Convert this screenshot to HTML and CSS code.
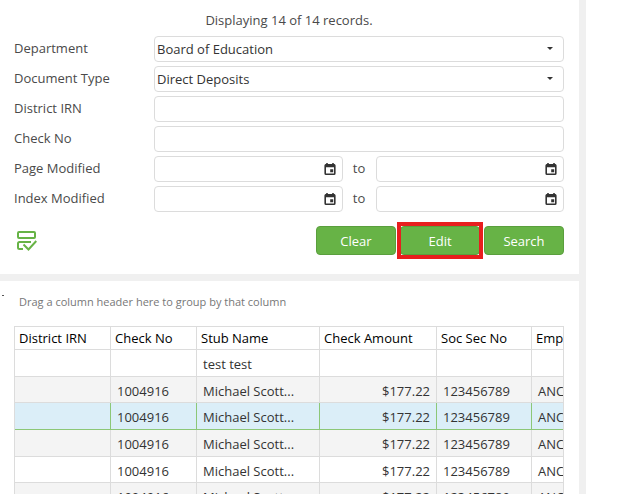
FILE: index.html
```html
<!DOCTYPE html>
<html lang="en">
<head>
    <meta charset="UTF-8">
    <meta name="viewport" content="width=device-width, initial-scale=1.0">
    <title>Document Search</title>
    <link rel="stylesheet" href="styles.css">
</head>
<body>
    <svg class="sprite" aria-hidden="true">
        <symbol id="calendar" viewBox="0 0 12 12">
            <path d="M3 0v2M9 0v2" stroke="currentColor" stroke-width="1.6"/>
            <rect x="1.2" y="1.7" width="9.6" height="9.5" rx="0.8" fill="none" stroke="currentColor" stroke-width="1.6"/>
            <path d="M1 1.5h10v2.7H1zM6.2 6.2h3v3h-3z" fill="currentColor"/>
        </symbol>
        <symbol id="arrow" viewBox="0 0 6 3">
            <path d="M0 0h6L3 3z" fill="currentColor"/>
        </symbol>
    </svg>

    <main>
        <form class="panel search" onsubmit="return false">
            <p class="records">Displaying 14 of 14 records.</p>

            <div class="fields">
                <label for="department">Department</label>
                <div class="field">
                    <select id="department">
                        <option>Board of Education</option>
                    </select>
                    <svg class="arrow"><use href="#arrow"/></svg>
                </div>

                <label for="docType">Document Type</label>
                <div class="field">
                    <select id="docType">
                        <option>Direct Deposits</option>
                    </select>
                    <svg class="arrow"><use href="#arrow"/></svg>
                </div>

                <label for="districtIrn">District IRN</label>
                <div class="field"><input type="text" id="districtIrn"></div>

                <label for="checkNo">Check No</label>
                <div class="field"><input type="text" id="checkNo"></div>

                <label for="pageFrom">Page Modified</label>
                <div class="range">
                    <div class="field">
                        <input type="text" id="pageFrom">
                        <button type="button" class="calendar" aria-label="Pick date"><svg><use href="#calendar"/></svg></button>
                    </div>
                    <label for="pageTo">to</label>
                    <div class="field">
                        <input type="text" id="pageTo">
                        <button type="button" class="calendar" aria-label="Pick date"><svg><use href="#calendar"/></svg></button>
                    </div>
                </div>

                <label for="indexFrom">Index Modified</label>
                <div class="range">
                    <div class="field">
                        <input type="text" id="indexFrom">
                        <button type="button" class="calendar" aria-label="Pick date"><svg><use href="#calendar"/></svg></button>
                    </div>
                    <label for="indexTo">to</label>
                    <div class="field">
                        <input type="text" id="indexTo">
                        <button type="button" class="calendar" aria-label="Pick date"><svg><use href="#calendar"/></svg></button>
                    </div>
                </div>
            </div>

            <div class="actions">
                <button type="button" class="select-rows" aria-label="Select rows">
                    <svg viewBox="0 0 20 20" fill="none" stroke="currentColor" stroke-width="2">
                        <rect x="1" y="1" width="17" height="6" rx="1"/>
                        <path d="M14 11H2.5Q1 11 1 12.500V16.500Q1 18 2.500 18H6"/>
                        <path d="M6.500 13.500L11.500 18.500L19.300 10"/>
                    </svg>
                </button>
                <button type="button" class="btn">Clear</button>
                <button type="button" class="btn highlight">Edit</button>
                <button type="submit" class="btn">Search</button>
            </div>
        </form>

        <section class="panel results">
            <div class="group-bar">
                <span class="mark"></span>
                <p>Drag a column header here to group by that column</p>
            </div>
            <div class="grid">
                <table>
                    <colgroup>
                        <col class="col-irn">
                        <col class="col-check">
                        <col class="col-stub">
                        <col class="col-amount">
                        <col class="col-ssn">
                        <col class="col-emp">
                    </colgroup>
                    <thead>
                        <tr><th>District IRN</th><th>Check No</th><th>Stub Name</th><th>Check Amount</th><th>Soc Sec No</th><th>Employee</th></tr>
                        <tr class="filter"><td></td><td></td><td>test test</td><td></td><td></td><td></td></tr>
                    </thead>
                    <tbody>
                        <tr><td></td><td>1004916</td><td>Michael Scott...</td><td class="amount">$177.22</td><td>123456789</td><td>ANC</td></tr>
                        <tr class="selected"><td></td><td>1004916</td><td>Michael Scott...</td><td class="amount">$177.22</td><td>123456789</td><td>ANC</td></tr>
                        <tr><td></td><td>1004916</td><td>Michael Scott...</td><td class="amount">$177.22</td><td>123456789</td><td>ANC</td></tr>
                        <tr><td></td><td>1004916</td><td>Michael Scott...</td><td class="amount">$177.22</td><td>123456789</td><td>ANC</td></tr>
                        <tr><td></td><td>1004916</td><td>Michael Scott...</td><td class="amount">$177.22</td><td>123456789</td><td>ANC</td></tr>
                    </tbody>
                </table>
            </div>
        </section>
    </main>
</body>
</html>
```
FILE: styles.css
```css
* {
    box-sizing: border-box;
}
body {
    margin: 0;
    height: 100vh;
    overflow: hidden;
    background-color: #fff;
    color: #4a4a4a;
    font-family: "Open Sans", "Noto Sans", sans-serif;
    font-size: 13px;
    line-height: 18px;
}
p {
    margin: 0;
}
input, select, button {
    font: inherit;
    color: #333;
    background: none;
    border: 0;
    padding: 0;
    margin: 0;
}
button {
    cursor: pointer;
}
svg {
    display: block;
}
.sprite {
    display: none;
}
main {
    margin-right: 39px;
}
.panel {
    border-right: 7px solid #f0f0f0;
}

/* search form */
.search {
    padding: 11px 15px 19px 14px;
    border-bottom: 7px solid #f0f0f0;
}
.records {
    text-align: center;
    margin-bottom: 7px;
}
.fields {
    display: grid;
    grid-template-columns: 140px minmax(0, 1fr);
    row-gap: 4px;
}
.fields label {
    line-height: 24px;
}
.field {
    display: flex;
    align-items: center;
    flex: 1;
    min-width: 0;
    height: 26px;
    border: 1px solid #dcdcdc;
    border-radius: 4px;
    position: relative;
}
.field input, .field select {
    flex: 1;
    min-width: 0;
    height: 24px;
    padding: 0 2px;
    outline: none;
    appearance: none;
}
.field .arrow {
    position: absolute;
    right: 10px;
    top: 10px;
    width: 6px;
    height: 3px;
    color: #333;
    pointer-events: none;
}
.range {
    display: flex;
}
.range label {
    width: 33px;
    text-align: center;
}
.calendar {
    margin-right: 6px;
}
.calendar svg {
    width: 12px;
    height: 12px;
}
.actions {
    display: flex;
    align-items: center;
    gap: 4px;
    margin-top: 14px;
}
.select-rows {
    margin-left: 3px;
    margin-right: auto;
    padding-top: 1px;
    color: #67b346;
}
.select-rows svg {
    width: 20px;
    height: 20px;
}
.btn {
    width: 80px;
    height: 29px;
    color: #fff;
    background-color: #67b346;
    border: 1px solid #5a9f3d;
    border-radius: 4px;
    position: relative;
}
.btn:hover {
    background-color: #5a9f3d;
}
.highlight::after {
    content: "";
    position: absolute;
    inset: -5px -4px;
    border: 4px solid #e81e1e;
}

/* results grid */
.results {
    padding-right: 15px;
}
.group-bar {
    display: flex;
    height: 45px;
    padding: 12px 0 0 2px;
    color: #777;
    font-size: 11px;
}
.mark {
    width: 2px;
    height: 1px;
    margin: 2px 15px 0 0;
    background-color: #555;
}
.grid {
    margin-left: 14px;
    overflow: hidden;
    border: 1px solid #dcdcdc;
    border-bottom: 0;
}
table {
    width: 620px;
    table-layout: fixed;
    border-collapse: separate;
    border-spacing: 0;
    color: #333;
}
.col-irn {
    width: 96px;
}
.col-check {
    width: 86px;
}
.col-stub {
    width: 123px;
}
.col-amount {
    width: 117px;
}
.col-ssn {
    width: 95px;
}
th, td {
    height: 27px;
    padding: 2px 6px 0;
    text-align: left;
    white-space: nowrap;
    border-right: 1px solid #dcdcdc;
    border-bottom: 1px solid #dcdcdc;
}
th {
    height: 23px;
    padding: 0 4px;
    color: #000;
    font-weight: normal;
}
tbody tr:nth-child(3n+1) td {
    height: 26px;
}
tbody tr:nth-child(odd) {
    background-color: #f4f4f4;
}
tbody .selected {
    background-color: #dbeef8;
}
.selected td {
    border-color: #8cc777;
}
.amount {
    text-align: right;
}
```
